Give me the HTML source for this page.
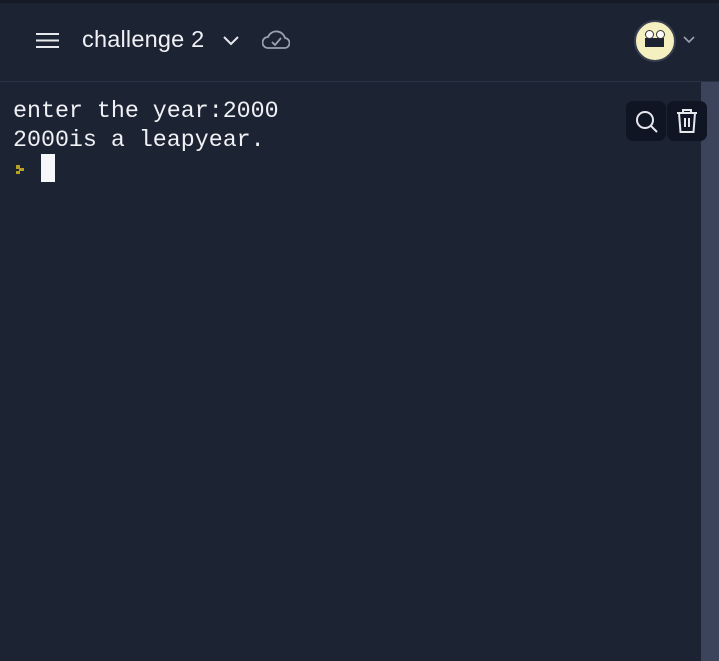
<!DOCTYPE html>
<html><head><style>
body{margin:0;width:719px;height:661px;background:#1c2333;overflow:hidden;position:relative;font-family:"Liberation Sans",sans-serif}
.top{position:absolute;left:0;top:0;width:719px;height:3px;background:#151a26}
.hdr{position:absolute;left:0;top:3px;width:719px;height:78px;background:#1c2333;border-bottom:1px solid #2b3245}
.title{position:absolute;left:82px;top:26px;color:#f0f1f5;font-size:23.5px;letter-spacing:0.2px}
.sb{position:absolute;left:701px;top:82px;width:18px;height:579px;background:#3c445c}
.term{position:absolute;left:13px;top:97px;font-family:"Liberation Mono","DejaVu Sans Mono",monospace;font-size:23.3px;line-height:29px;color:#f0f1f5;white-space:pre}
.btn{position:absolute;top:101px;width:40px;height:40px;background:#0f1522;border-radius:7px}
</style></head><body>
<div class="top"></div>
<div class="hdr"></div>
<svg style="position:absolute;left:35px;top:32px" width="25" height="17"><path d="M1 2H24M1 8.5H24M1 15H24" stroke="#e6e8ee" stroke-width="2"/></svg>
<div class="title">challenge 2</div>
<svg style="position:absolute;left:222px;top:34px" width="18" height="12"><path d="M2 3L9 10L16 3" stroke="#e6e8ee" stroke-width="2" fill="none"/></svg>
<svg style="position:absolute;left:262px;top:29px" width="28" height="22"><path d="M6 19H22A5 5 0 0 0 23 9A9 9 0 0 0 6 8A5.5 5.5 0 0 0 6 19Z" stroke="#9aa0b0" stroke-width="1.8" fill="none"/><path d="M10 13L13 16L19 9" stroke="#9aa0b0" stroke-width="1.8" fill="none"/></svg>
<div style="position:absolute;left:634px;top:20px;width:38px;height:38px;border-radius:50%;background:#f5f0c0;border:2px solid #3a4050"></div>
<div style="position:absolute;left:645px;top:38px;width:19px;height:9px;background:#1c2333"></div>
<div style="position:absolute;left:645px;top:30px;width:7px;height:7px;border-radius:50%;background:#fff;border:1px solid #333"></div>
<div style="position:absolute;left:656px;top:30px;width:7px;height:7px;border-radius:50%;background:#fff;border:1px solid #333"></div>
<svg style="position:absolute;left:682px;top:35px" width="14" height="10"><path d="M2 2L7 7L12 2" stroke="#9aa0b0" stroke-width="1.6" fill="none"/></svg>
<div class="sb"></div>
<div class="term">enter the year:2000
2000is a leapyear.</div>
<svg style="position:absolute;left:14px;top:163px" width="12" height="12"><path d="M2 2h4v3h4v3h-4v3h-4v-3h3v-2h-3z" fill="#b8a020"/></svg>
<div style="position:absolute;left:41px;top:154px;width:14px;height:28px;background:#f5f7fa"></div>
<div class="btn" style="left:626px"></div>
<div class="btn" style="left:667px"></div>
<svg style="position:absolute;left:634px;top:109px" width="26" height="26"><circle cx="11" cy="11" r="8" stroke="#e6e8ee" stroke-width="2" fill="none"/><path d="M17 17L23 23" stroke="#e6e8ee" stroke-width="2"/></svg>
<svg style="position:absolute;left:675px;top:108px" width="24" height="26"><path d="M2 5H22M8 5V2H16V5M4 5L5.5 24H18.5L20 5M10 10V19M14 10V19" stroke="#e6e8ee" stroke-width="2" fill="none"/></svg>
</body></html>
